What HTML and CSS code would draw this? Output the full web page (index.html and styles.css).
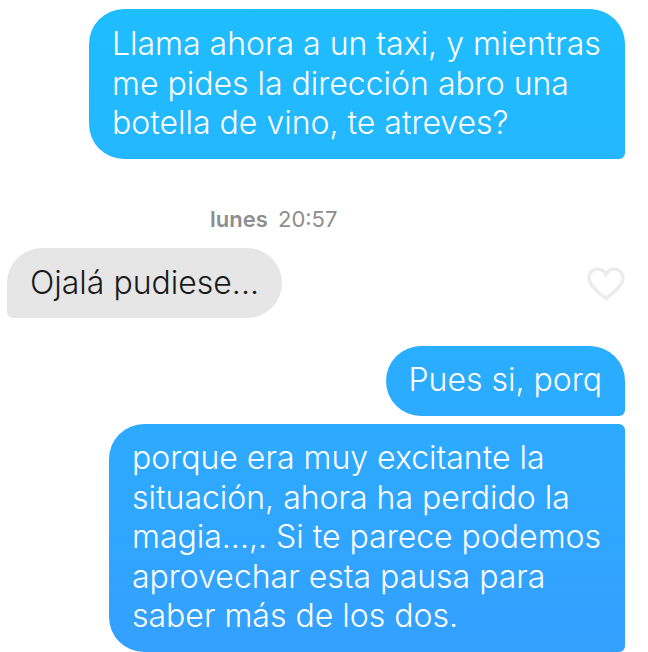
FILE: index.html
```html
<!DOCTYPE html>
<html lang="es">
<head>
    <meta charset="UTF-8">
    <meta name="viewport" content="width=device-width, initial-scale=1.0">
    <title>Mensajes</title>
    <link rel="stylesheet" href="styles.css">
</head>
<body>
    <div class="chat">
        <div class="bubble sent first-msg">Llama ahora a un taxi, y mientras<br>me pides la dirección abro una<br>botella de vino, te atreves?</div>

        <div class="timestamp"><b>lunes</b> 20:57</div>

        <div class="received-row">
            <div class="bubble received">Ojalá pudiese...</div>
            <svg class="heart" viewBox="0 0 38 34" width="38" height="34" aria-hidden="true">
                <path d="M19 31.5 C13 26.5 2 19 2 10.8 C2 5.6 6 2 10.4 2 C14 2 17.2 4 19 7.4 C20.8 4 24 2 27.6 2 C32 2 36 5.6 36 10.8 C36 19 25 26.5 19 31.5 Z"/>
            </svg>
        </div>

        <div class="bubble sent short top-group">Pues si, porq</div>
        <div class="bubble sent bottom-group">porque era muy excitante la<br>situación, ahora ha perdido la<br>magia...,. Si te parece podemos<br>aprovechar esta pausa para<br>saber más de los dos.</div>
    </div>
</body>
</html>
```

FILE: styles.css
```css
* {
    margin: 0;
    padding: 0;
    box-sizing: border-box;
}

body {
    background: #fff;
    font-family: Inter, "Liberation Sans", sans-serif;
    overflow: hidden;
}

.chat {
    display: flex;
    flex-direction: column;
    align-items: flex-end;
    height: 652px;
    padding: 9px 23px 0 7px;
}

.bubble {
    font-size: 32px;
    line-height: 39.5px;
    font-weight: 300;
    padding: 15px 23px;
    border-radius: 35px;
    white-space: nowrap;
}

.sent {
    color: #fff;
    background: linear-gradient(180deg, #1ebeff 0%, #34a0ff 100%) fixed;
    border-bottom-right-radius: 6px;
}

.first-msg {
    width: 536px;
    height: 150px;
}

.timestamp {
    align-self: flex-start;
    margin: 49px 0 0 203px;
    height: 22px;
    font-size: 22px;
    line-height: 22px;
    color: #8e8e8e;
}

.timestamp b {
    font-weight: 600;
    margin-right: 4px;
}

.received-row {
    align-self: stretch;
    display: flex;
    justify-content: space-between;
    align-items: center;
    margin-top: 18px;
}

.received {
    color: #1a1a1a;
    background: #e6e6e6;
    border-bottom-left-radius: 6px;
    height: 70px;
}

.heart {
    fill: none;
    stroke: #ececec;
    stroke-width: 3.5;
    margin-top: 2px;
}

.short {
    margin-top: 28px;
    height: 70px;
    padding-top: 14px;
}

.top-group {
    margin-bottom: 8px;
}

.bottom-group {
    width: 516px;
    height: 228px;
    border-top-right-radius: 6px;
    padding-top: 14px;
}
```
